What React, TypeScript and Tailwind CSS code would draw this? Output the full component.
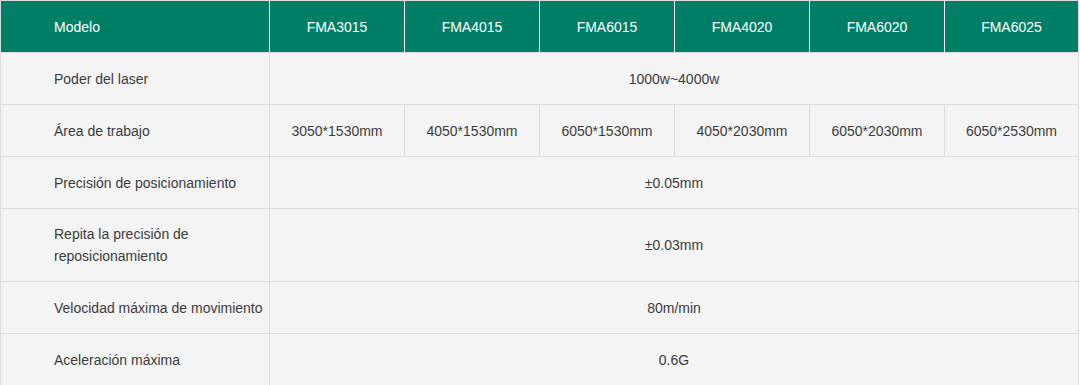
import React from "react";

const models = ["FMA3015", "FMA4015", "FMA6015", "FMA4020", "FMA6020", "FMA6025"];
const areas = ["3050*1530mm", "4050*1530mm", "6050*1530mm", "4050*2030mm", "6050*2030mm", "6050*2530mm"];

const labelCls = "border border-[#dddddd] pl-[53px] pr-0 text-left align-middle whitespace-nowrap";
const cellCls = "border border-[#dddddd] text-center align-middle";

export default function App() {
  return (
    <div className="w-[1080px] h-[385px] overflow-hidden bg-white" style={{ fontFamily: '"Liberation Sans", Arial, sans-serif' }}>
      <table className="table-fixed border-collapse w-[1078px] text-[14px] leading-[22px] text-[#3c3c3c] bg-[#f4f4f4]">
        <colgroup>
          <col className="w-[269px]" />
          <col className="w-[135px]" />
          <col className="w-[135px]" />
          <col className="w-[135px]" />
          <col className="w-[135px]" />
          <col className="w-[135px]" />
          <col className="w-[134px]" />
        </colgroup>
        <thead>
          <tr className="h-[52px] bg-[#007f66] text-white">
            <th className="border border-[#dddddd] border-r-white pl-[53px] text-left font-normal">Modelo</th>
            {models.map((m, i) => (
              <th key={m} className={`border border-[#dddddd] ${i < 5 ? "border-r-white" : ""} text-center font-normal`}>
                {m}
              </th>
            ))}
          </tr>
        </thead>
        <tbody>
          <tr className="h-[52px]">
            <td className={labelCls}>Poder del laser</td>
            <td className={cellCls} colSpan={6}>1000w~4000w</td>
          </tr>
          <tr className="h-[52px]">
            <td className={labelCls}>Área de trabajo</td>
            {areas.map((a) => (
              <td key={a} className={cellCls}>{a}</td>
            ))}
          </tr>
          <tr className="h-[52px]">
            <td className={labelCls}>Precisión de posicionamiento</td>
            <td className={cellCls} colSpan={6}>±0.05mm</td>
          </tr>
          <tr className="h-[73px]">
            <td className="border border-[#dddddd] pl-[53px] pr-[60px] text-left align-middle">Repita la precisión de reposicionamiento</td>
            <td className={cellCls} colSpan={6}>±0.03mm</td>
          </tr>
          <tr className="h-[52px]">
            <td className={labelCls}>Velocidad máxima de movimiento</td>
            <td className={cellCls} colSpan={6}>80m/min</td>
          </tr>
          <tr className="h-[52px]">
            <td className={labelCls}>Aceleración máxima</td>
            <td className={cellCls} colSpan={6}>0.6G</td>
          </tr>
        </tbody>
      </table>
    </div>
  );
}
